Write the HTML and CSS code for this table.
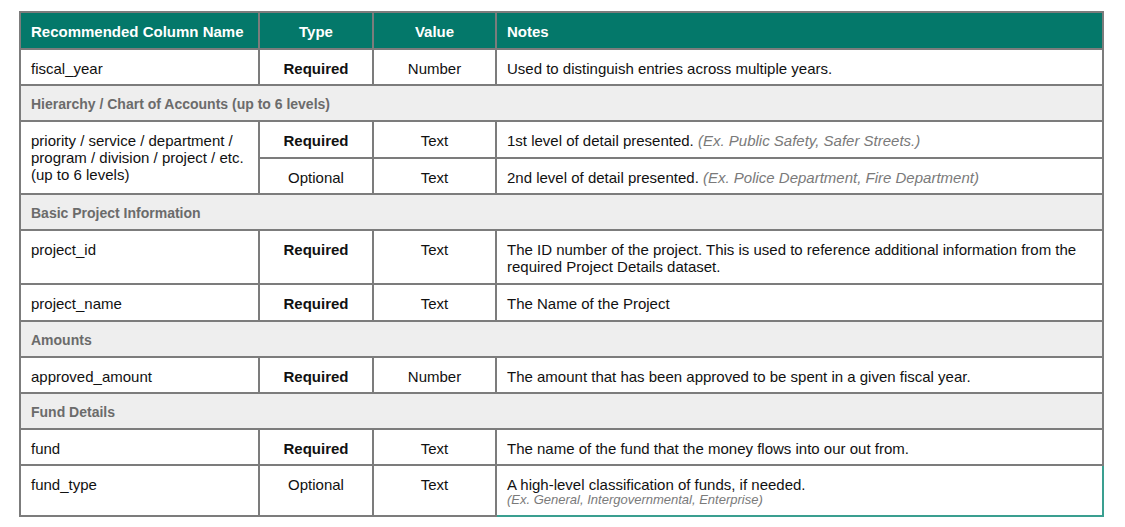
FILE: index.html
```html
<!DOCTYPE html>
<html>
<head>
<meta charset="utf-8">
<link rel="stylesheet" href="styles.css">
</head>
<body>
<div class="page">
<table class="spec">
  <colgroup>
    <col class="c-name"><col class="c-type"><col class="c-value"><col class="c-notes">
  </colgroup>
  <thead>
    <tr>
      <th>Recommended Column Name</th>
      <th class="center">Type</th>
      <th class="center">Value</th>
      <th>Notes</th>
    </tr>
  </thead>
  <tbody>
    <tr>
      <td>fiscal_year</td>
      <td class="center req">Required</td>
      <td class="center">Number</td>
      <td>Used to distinguish entries across multiple years.</td>
    </tr>
    <tr class="section"><td colspan="4">Hierarchy / Chart of Accounts (up to 6 levels)</td></tr>
    <tr class="tall">
      <td rowspan="2">priority / service / department / program / division / project / etc. (up to 6 levels)</td>
      <td class="center req">Required</td>
      <td class="center">Text</td>
      <td>1st level of detail presented. <em class="ex">(Ex. Public Safety, Safer Streets.)</em></td>
    </tr>
    <tr>
      <td class="center">Optional</td>
      <td class="center">Text</td>
      <td>2nd level of detail presented. <em class="ex">(Ex. Police Department, Fire Department)</em></td>
    </tr>
    <tr class="section"><td colspan="4">Basic Project Information</td></tr>
    <tr class="tall">
      <td>project_id</td>
      <td class="center req">Required</td>
      <td class="center">Text</td>
      <td>The ID number of the project. This is used to reference additional information from the required Project Details dataset.</td>
    </tr>
    <tr class="tall">
      <td>project_name</td>
      <td class="center req">Required</td>
      <td class="center">Text</td>
      <td>The Name of the Project</td>
    </tr>
    <tr class="section"><td colspan="4">Amounts</td></tr>
    <tr>
      <td>approved_amount</td>
      <td class="center req">Required</td>
      <td class="center">Number</td>
      <td>The amount that has been approved to be spent in a given fiscal year.</td>
    </tr>
    <tr class="section"><td colspan="4">Fund Details</td></tr>
    <tr>
      <td>fund</td>
      <td class="center req">Required</td>
      <td class="center">Text</td>
      <td>The name of the fund that the money flows into our out from.</td>
    </tr>
    <tr class="last">
      <td>fund_type</td>
      <td class="center">Optional</td>
      <td class="center">Text</td>
      <td class="selected">A high-level classification of funds, if needed.<span class="ex small">(Ex. General, Intergovernmental, Enterprise)</span></td>
    </tr>
  </tbody>
</table>
</div>
</body>
</html>
```

FILE: styles.css
```css
html, body {
  margin: 0;
  padding: 0;
  background: #ffffff;
}

.page {
  padding: 11px 0 0 19px;
}

.spec {
  border-collapse: collapse;
  table-layout: fixed;
  width: 1083px;
  font-family: "Liberation Sans", Arial, Helvetica, sans-serif;
  font-size: 15px;
  color: #111111;
}

.c-name { width: 239px; }
.c-type { width: 114px; }
.c-value { width: 123px; }
.c-notes { width: 607px; }

.spec th,
.spec td {
  border: 2px solid #7c7c7c;
  line-height: 17px;
  vertical-align: top;
  text-align: left;
}

.spec th {
  background: #04786a;
  color: #ffffff;
  font-weight: bold;
  padding: 10px 10px 8px 10px;
}

.spec td {
  padding: 10px 10px 7px 10px;
}

.spec .tall td {
  padding-bottom: 8px;
}

.spec .center {
  text-align: center;
}

.spec .req {
  font-weight: bold;
}

.spec .section td {
  background: #eeeeee;
  color: #6b6b6b;
  font-weight: bold;
  font-size: 14px;
}

.ex {
  color: #7a7a7a;
  font-style: italic;
}

.ex.small {
  display: block;
  font-size: 13px;
  line-height: 14px;
}

.spec .last td {
  padding-bottom: 8px;
}

.spec td.selected {
  border-right-color: #3a9f90;
  border-bottom-color: #3a9f90;
}
```
